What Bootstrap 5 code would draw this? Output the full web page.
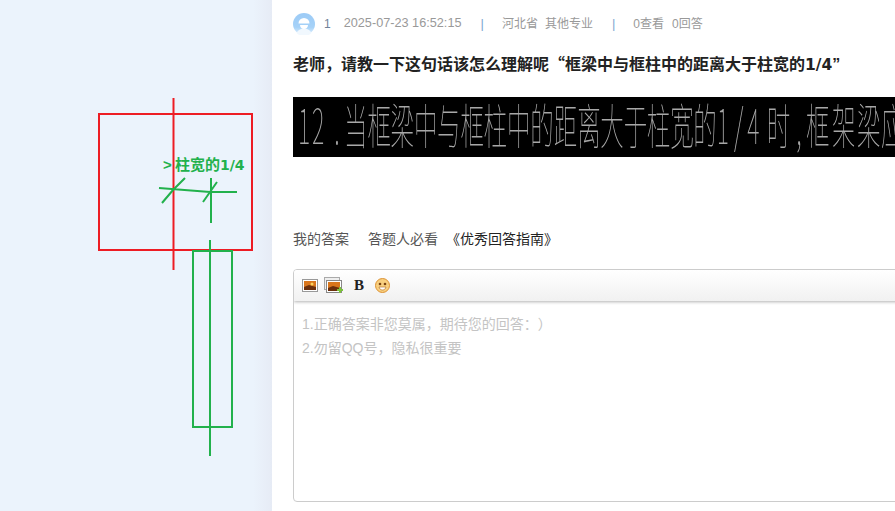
<!DOCTYPE html>
<html lang="zh">
<head>
<meta charset="utf-8">
<title>问答</title>
<link href="https://cdn.jsdelivr.net/npm/bootstrap@5.3.0/dist/css/bootstrap.min.css" rel="stylesheet">
<style>
html,body{height:511px;overflow:hidden;}
body{font-family:"Liberation Sans","Noto Sans CJK SC",sans-serif;background:#fff;color:#333;text-spacing-trim:space-all;}
.shell{width:895px;height:511px;overflow:hidden;}
.side-pane{width:273px;height:511px;flex:none;background:linear-gradient(90deg,#ebf3fc 0,#ebf3fc 253px,#e6ebf5 272px,#fff 272px);}
.side-pane svg{display:block;}
.sketch-label{font:bold 15px "Liberation Sans","Noto Sans CJK SC",sans-serif;fill:#22b14c;}
.sketch-digits{font:bold 14px "DejaVu Sans",sans-serif;}
.main-pane{width:622px;flex:none;padding:13px 0 0 20px;overflow:hidden;}
.meta-row{height:22px;font-size:12px;color:#999;white-space:nowrap;}
.meta-row .who{margin:0 13px 0 9px;color:#6f8299;}
.meta-row .stamp{font-size:12.7px;margin-right:1px;}
.meta-row .pipe{color:#7fa8d0;margin:0 18px;font-size:13px;}
.meta-row .tail{margin-left:7px;margin-right:1px;}
.meta-row .tail-b{margin-left:8px;}
.cjk-mark{font-family:"Noto Sans CJK SC",sans-serif;line-height:0;}
.cjk-center{font-family:"Noto Sans CJK TC",sans-serif;line-height:0;}
.title-digits{font-family:"DejaVu Sans",sans-serif;font-size:15.5px;line-height:0;}
.question{font-size:16px;font-weight:700;color:#222;margin:20px 0 0;line-height:20px;height:20px;white-space:nowrap;}
.cad-strip{height:60px;margin-top:22px;background:#000;overflow:hidden;}
.cad-strip svg{display:block;will-change:transform;}
.cad-text{font-family:"Noto Sans CJK SC",sans-serif;font-weight:100;font-size:48px;fill:#a8a8a8;}
.guide-row{margin-top:72px;font-size:14px;line-height:20px;height:20px;color:#555;white-space:nowrap;}
.guide-row a{color:#222;text-decoration:none;margin-left:8px;font-size:14px;}
.guide-row .must{margin-left:19px;}
.editor-box{margin-top:20px;height:233px;width:640px;border:1px solid #ccc;border-radius:4px;overflow:hidden;}
.editor-tools{height:31px;background:linear-gradient(#fff,#f1f1f1);box-shadow:0 1px 3px rgba(0,0,0,.3);padding-left:8px;position:relative;}
.editor-tools .bold-mark{font:bold 15px "Liberation Serif",serif;color:#222;margin:0 11px 0 10px;}
.tool-first{margin-right:6px;}
.editor-hints{padding:11px 8px;font-size:14px;line-height:24px;color:#c4c4c4;}
</style>
</head>
<body>
<div class="shell d-flex">
  <aside class="side-pane">
    <svg width="272" height="511" viewBox="0 0 272 511" fill="none">
      <rect x="99" y="114" width="153" height="136" stroke="#ed1c24" stroke-width="2"/>
      <path d="M173.5 98V270" stroke="#ed1c24" stroke-width="2"/>
      <text class="sketch-label" x="163" y="170">&gt;</text>
      <text class="sketch-label" x="175" y="170">柱宽的<tspan class="sketch-digits">1/4</tspan></text>
      <path d="M159 188 210 192H237M185 178 173 190 162 203M217 182 203 202M211 178V223M210 240V456" stroke="#22b14c" stroke-width="2"/>
      <rect x="193" y="251" width="39" height="176" stroke="#22b14c" stroke-width="2"/>
    </svg>
  </aside>
  <main class="main-pane">
    <div class="meta-row d-flex align-items-center">
      <svg width="22" height="22" viewBox="0 0 22 22">
        <defs><linearGradient id="avatarFill" x1="0" y1="0" x2="0" y2="1"><stop offset="0" stop-color="#9ccbf6"/><stop offset=".65" stop-color="#a6d2f8"/><stop offset="1" stop-color="#e6f3fd"/></linearGradient></defs>
        <circle cx="11" cy="11" r="11" fill="url(#avatarFill)"/>
        <path d="M3.500 20c2-3.500 4.500-4.500 7.500-4.500s5.500 1 7.500 4.500a11 11 0 0 1-15 0Z" fill="#f1f8fe"/>
        <path d="M5.500 10.500a5.500 5.500 0 0 1 11 0Z" fill="#fff"/>
        <path d="M7 12h8c0 2.500-2 4-4 4s-4-1.500-4-4Z" fill="#fff"/>
      </svg>
      <span class="who">1</span>
      <span class="stamp">2025-07-23 16:52:15</span>
      <span class="pipe">|</span>
      <span>河北省</span><span class="tail">其他专业</span>
      <span class="pipe">|</span>
      <span>0查看</span><span class="tail-b">0回答</span>
    </div>
    <h1 class="question">老师<span class="cjk-center">，</span>请教一下这句话该怎么理解呢<span class="cjk-mark">“</span>框梁中与框柱中的距离大于柱宽的<span class="title-digits">1/4</span>”</h1>
    <div class="cad-strip">
      <svg width="602" height="60" viewBox="0 0 602 60">
        <text class="cad-text" transform="scale(.49 1)" y="47" x="10 39 84 104 152 199 247 294 342 389 437 484 532 580 627 675 722 770 817 865 900 927 967 1027 1047 1100 1151 1200">12.当框梁中与框柱中的距离大于柱宽的1/4时,框架梁应</text>
      </svg>
    </div>
    <div class="guide-row"><span>我的答案</span><span class="must">答题人必看</span><a href="#">《优秀回答指南》</a></div>
    <div class="editor-box">
      <div class="editor-tools d-flex align-items-center">
        <svg width="16" height="13" viewBox="0 0 16 13" class="tool-first">
          <rect x=".5" y=".5" width="15" height="12" fill="#fff" stroke="#999"/>
          <rect x="2" y="2" width="12" height="9" fill="#d9761c"/>
          <path d="M2 8 7 6l7 2v3H2Z" fill="#6b2f0c"/>
          <circle cx="10" cy="5" r="1.5" fill="#fbd25b"/>
        </svg>
        <svg width="20" height="18" viewBox="0 0 20 18">
          <rect x=".5" y=".5" width="15" height="12" fill="#eee" stroke="#aaa"/>
          <rect x="2.500" y="3.500" width="15" height="12" fill="#fff" stroke="#888"/>
          <rect x="4" y="5" width="12" height="9" fill="#d9761c"/>
          <path d="M4 11l5-2 7 2v3H4Z" fill="#6b2f0c"/>
          <path d="M15 10h2v2h2v2h-2v2h-2v-2h-2v-2h2Z" fill="#7cc23a"/>
        </svg>
        <span class="bold-mark">B</span>
        <svg width="15" height="15" viewBox="0 0 15 15">
          <circle cx="7.500" cy="7.500" r="7" fill="#f8cf7f" stroke="#dd9233"/>
          <circle cx="5" cy="6" r="1.300" fill="#7a4413"/>
          <circle cx="10" cy="6" r="1.300" fill="#7a4413"/>
          <path d="M4 9h7c-.5 2-2 3-3.500 3S4.500 11 4 9Z" fill="#fff" stroke="#a8621f" stroke-width=".6"/>
        </svg>
      </div>
      <div class="editor-hints">1.正确答案非您莫属<span class="cjk-center">，</span>期待您的回答<span class="cjk-center">：）</span><br>2.勿留QQ号<span class="cjk-center">，</span>隐私很重要</div>
    </div>
  </main>
</div>
<script src="https://cdn.jsdelivr.net/npm/bootstrap@5.3.0/dist/js/bootstrap.bundle.min.js"></script>
</body>
</html>
